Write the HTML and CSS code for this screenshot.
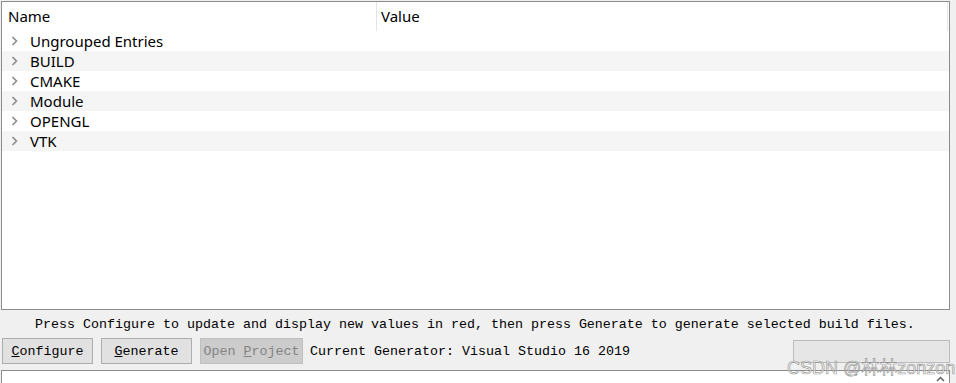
FILE: index.html
```html
<!DOCTYPE html>
<html lang="en">
<head>
  <meta charset="UTF-8" />
  <title>CMake</title>
  <link rel="stylesheet" href="styles.css">
</head>
<body>

  <div class="tree">
    <div class="tree-header">
      <div class="col-name">Name</div>
      <div class="col-value">Value</div>
    </div>
    <div class="row"><span class="chev"><svg width="8" height="10" viewBox="0 0 8 10"><path d="M1.5 1 L5.5 5 L1.5 9" fill="none" stroke="#8a8a8a" stroke-width="1.6"/></svg></span>Ungrouped Entries</div>
    <div class="row alt"><span class="chev"><svg width="8" height="10" viewBox="0 0 8 10"><path d="M1.5 1 L5.5 5 L1.5 9" fill="none" stroke="#8a8a8a" stroke-width="1.6"/></svg></span>BUILD</div>
    <div class="row"><span class="chev"><svg width="8" height="10" viewBox="0 0 8 10"><path d="M1.5 1 L5.5 5 L1.5 9" fill="none" stroke="#8a8a8a" stroke-width="1.6"/></svg></span>CMAKE</div>
    <div class="row alt"><span class="chev"><svg width="8" height="10" viewBox="0 0 8 10"><path d="M1.5 1 L5.5 5 L1.5 9" fill="none" stroke="#8a8a8a" stroke-width="1.6"/></svg></span>Module</div>
    <div class="row"><span class="chev"><svg width="8" height="10" viewBox="0 0 8 10"><path d="M1.5 1 L5.5 5 L1.5 9" fill="none" stroke="#8a8a8a" stroke-width="1.6"/></svg></span>OPENGL</div>
    <div class="row alt"><span class="chev"><svg width="8" height="10" viewBox="0 0 8 10"><path d="M1.5 1 L5.5 5 L1.5 9" fill="none" stroke="#8a8a8a" stroke-width="1.6"/></svg></span>VTK</div>
  </div>

  <div class="hint">Press Configure to update and display new values in red, then press Generate to generate selected build files.</div>

  <div class="actions">
    <button class="btn btn-configure"><u>C</u>onfigure</button>
    <button class="btn btn-generate"><u>G</u>enerate</button>
    <button class="btn btn-open" disabled>Open <u>P</u>roject</button>
    <span class="generator">Current Generator: Visual Studio 16 2019</span>
    <div class="progress"></div>
  </div>

  <div class="output">
    <span class="scroll-up"><svg width="9" height="6" viewBox="0 0 9 6"><path d="M1 5 L4.5 1.5 L8 5" fill="none" stroke="#606060" stroke-width="1.5"/></svg></span>
  </div>

  <div class="watermark">CSDN @林林zonzon</div>

</body>
</html>
```

FILE: styles.css
```css
body {
  margin: 0;
  padding: 0;
  background: #f0f0f0;
  width: 956px;
  height: 383px;
  overflow: hidden;
  position: relative;
}

.tree {
  box-sizing: border-box;
  margin: 1px 0 0 1px;
  width: 949px;
  height: 309px;
  background: #fff;
  border: 1px solid #8c8c8c;
  font-family: "Noto Sans", sans-serif;
  font-size: 15px;
  color: #000;
}

.tree-header {
  display: flex;
  height: 29px;
}

.col-name {
  box-sizing: border-box;
  width: 375px;
  padding: 4px 0 0 6px;
  border-right: 1px solid #e5e5e5;
}

.col-value {
  box-sizing: border-box;
  width: 571px;
  padding: 4px 0 0 4px;
  border-right: 1px solid #e5e5e5;
}

.row {
  display: flex;
  align-items: center;
  height: 20px;
  line-height: 20px;
}

.row.alt {
  background: #f5f5f5;
}

.chev {
  display: flex;
  width: 8px;
  margin: 0 11px 0 9px;
}

.hint {
  height: 28px;
  line-height: 30px;
  padding-left: 35px;
  font-family: "Liberation Mono", monospace;
  font-size: 13.33px;
  color: #000;
}

.actions {
  display: flex;
  align-items: center;
  height: 26px;
  padding-left: 2px;
  font-family: "Liberation Mono", monospace;
  font-size: 13.33px;
}

.btn {
  box-sizing: border-box;
  height: 26px;
  margin-right: 8px;
  padding: 0;
  background: #e1e1e1;
  border: 1px solid #adadad;
  font-family: inherit;
  font-size: inherit;
  color: #000;
}

.btn-configure { width: 91px; }
.btn-generate { width: 91px; margin-right: 8px; }

.btn-open {
  width: 103px;
  margin-right: 7px;
  background: #cccccc;
  border-color: #bfbfbf;
  color: #838383;
}

.generator {
  color: #000;
}

.progress {
  box-sizing: border-box;
  width: 157px;
  height: 23px;
  margin-left: auto;
  margin-right: 6px;
  background: #e6e6e6;
  border: 1px solid #bcbcbc;
}

.output {
  box-sizing: border-box;
  margin: 6px 0 0 1px;
  width: 949px;
  height: 30px;
  background: #fff;
  border: 1px solid #8c8c8c;
  display: flex;
  justify-content: flex-end;
}

.scroll-up {
  display: flex;
  padding: 5px 4px 0 0;
}

.watermark {
  position: absolute;
  left: 787px;
  top: 353px;
  font-family: "Liberation Sans", "Noto Sans CJK SC", sans-serif;
  font-size: 18px;
  color: rgba(255, 255, 255, 0.7);
  -webkit-text-stroke: 0.7px rgba(110, 110, 110, 0.7);
}
```
